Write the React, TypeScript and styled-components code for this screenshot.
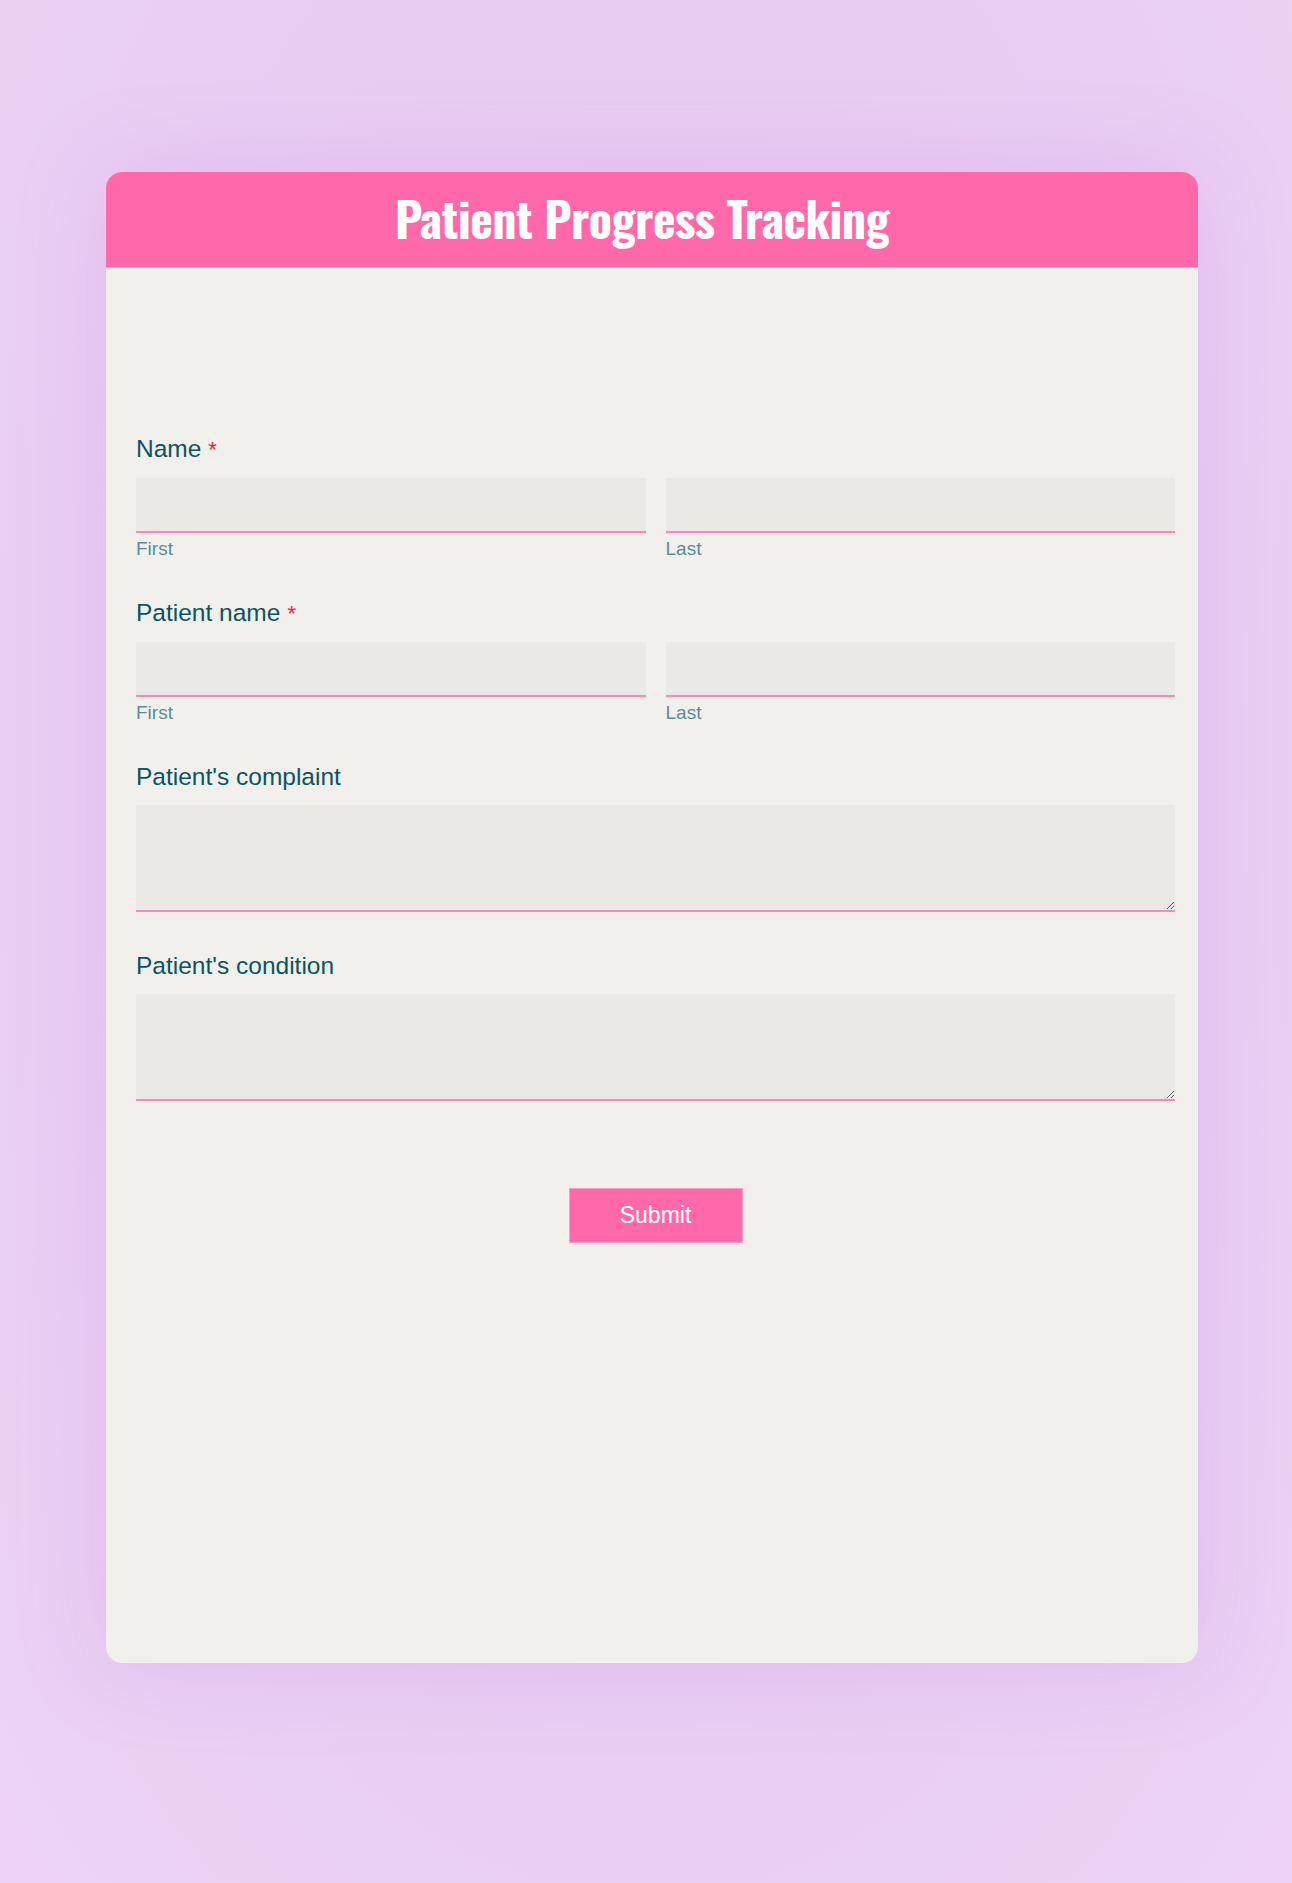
import React from "react";
import styled, { createGlobalStyle } from "styled-components";

const Global = createGlobalStyle`
  html, body { margin: 0; padding: 0; }
  body {
    background: radial-gradient(ellipse at 50% 40%, #e6c9ef 0%, #e9ccf2 45%, #ecd2f6 100%);
    min-height: 1883px;
    font-family: "Liberation Sans", Arial, sans-serif;
  }
`;

const Page = styled.div`
  padding: 172px 94px 220px 106px;
`;

const Card = styled.div`
  background: #f2f0ec;
  border-radius: 16px;
  height: 1491px;
  overflow: hidden;
  box-shadow: 0 0 90px rgba(190, 120, 210, 0.22);
`;

const Header = styled.div`
  height: 95px;
  background: #ff69a9;
  border-bottom: 1px solid #f9a6c8;
  display: flex;
  align-items: center;
  justify-content: center;
  padding-right: 20px;
`;

const Title = styled.h1`
  margin: 0;
  color: #ffffff;
  font-family: "Oswald", "Liberation Sans Narrow", "DejaVu Sans Condensed", sans-serif;
  font-stretch: condensed;
  font-weight: 700;
  font-size: 48px;
  letter-spacing: -0.5px;
  line-height: 1;
  padding-bottom: 4px;
`;

const Form = styled.form`
  padding: 168px 23px 0 30px;
  display: flex;
  flex-direction: column;
`;

const Group = styled.div`
  display: flex;
  flex-direction: column;
  margin-bottom: 41px;
`;

const Label = styled.label`
  color: #0b5560;
  font-size: 24.5px;
  line-height: 26px;
  margin-bottom: 15px;
`;

const Req = styled.span`
  color: #ff1a2e;
  margin-left: 7px;
  font-size: 22px;
`;

const Row = styled.div`
  display: grid;
  grid-template-columns: 1fr 1fr;
  gap: 20px;
`;

const Col = styled.div`
  display: flex;
  flex-direction: column;
`;

const Input = styled.input`
  box-sizing: border-box;
  height: 55px;
  border: none;
  border-bottom: 2px solid #ff85bb;
  background: #ebe9e6;
  outline: none;
  font-size: 18px;
  padding: 0 10px;
`;

const SubLabel = styled.span`
  color: #5b8e94;
  font-size: 19px;
  line-height: 20px;
  margin-top: 6px;
`;

const TextArea = styled.textarea`
  box-sizing: border-box;
  height: 107px;
  border: none;
  border-bottom: 2px solid #ff85bb;
  background: #ebe9e6;
  outline: none;
  font-size: 18px;
  padding: 8px 10px;
  resize: vertical;
  font-family: "Liberation Sans", Arial, sans-serif;
`;

const Actions = styled.div`
  display: flex;
  justify-content: center;
  margin-top: 46px;
`;

const Submit = styled.button`
  width: 174px;
  height: 55px;
  background: #ff69a9;
  border: 1px solid #ff9cc6;
  color: #ffffff;
  font-family: "Liberation Sans", Arial, sans-serif;
  font-size: 23px;
  cursor: pointer;
`;

export default function App() {
  return (
    <>
      <Global />
      <Page>
        <Card>
          <Header>
            <Title>Patient Progress Tracking</Title>
          </Header>
          <Form onSubmit={(e) => e.preventDefault()}>
            <Group>
              <Label>
                Name<Req>*</Req>
              </Label>
              <Row>
                <Col>
                  <Input type="text" />
                  <SubLabel>First</SubLabel>
                </Col>
                <Col>
                  <Input type="text" />
                  <SubLabel>Last</SubLabel>
                </Col>
              </Row>
            </Group>
            <Group>
              <Label>
                Patient name<Req>*</Req>
              </Label>
              <Row>
                <Col>
                  <Input type="text" />
                  <SubLabel>First</SubLabel>
                </Col>
                <Col>
                  <Input type="text" />
                  <SubLabel>Last</SubLabel>
                </Col>
              </Row>
            </Group>
            <Group>
              <Label>Patient's complaint</Label>
              <TextArea />
            </Group>
            <Group>
              <Label>Patient's condition</Label>
              <TextArea />
            </Group>
            <Actions>
              <Submit type="submit">Submit</Submit>
            </Actions>
          </Form>
        </Card>
      </Page>
    </>
  );
}
